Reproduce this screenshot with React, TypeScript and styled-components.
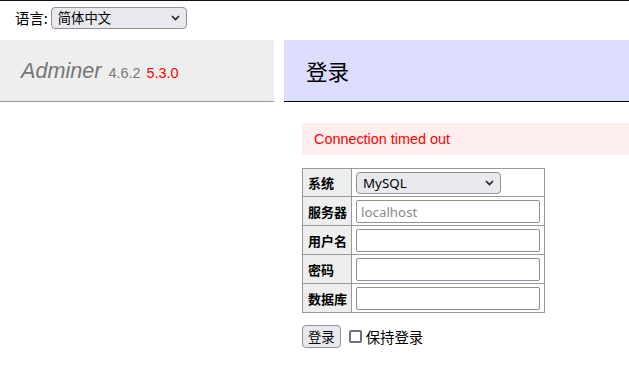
import React from "react";
import styled, { createGlobalStyle } from "styled-components";

const GlobalStyle = createGlobalStyle`
    html, body {
        margin: 0;
        padding: 0;
        background: #fff;
    }
    body {
        font-family: "Liberation Sans", "Noto Sans CJK SC", Arial, sans-serif;
        font-size: 14.4px;
        color: #000;
    }
`;

const controlFont = `"Noto Sans", "Noto Sans CJK SC", sans-serif`;

const Page = styled.div`
    display: flex;
    flex-direction: column;
    min-height: 374px;
    border-top: 1px solid #111;
`;

const LangBar = styled.div`
    display: flex;
    align-items: flex-start;
    gap: 3px;
    height: 39px;
    padding: 6px 0 0 15px;
    box-sizing: border-box;
`;

const LangLabel = styled.span`
    font-family: "Noto Sans CJK SC", sans-serif;
    font-size: 14.4px;
    line-height: 22px;
`;

const SelectWrap = styled.span`
    position: relative;
    display: inline-flex;
`;

const Select = styled.select<{ $width: number }>`
    appearance: none;
    width: ${(p) => p.$width}px;
    height: 22px;
    box-sizing: border-box;
    padding: 0 20px 0 6px;
    font-family: ${controlFont};
    font-size: 13.33px;
    color: #000;
    background: #e9e9ed;
    border: 1px solid #8f8f9d;
    border-radius: 4px;
    outline: none;
`;

const Chevron = styled.svg`
    position: absolute;
    right: 7px;
    top: 8px;
    width: 9px;
    height: 6px;
    pointer-events: none;
`;

const Main = styled.div`
    display: flex;
    gap: 10px;
`;

const Menu = styled.div`
    width: 274px;
    flex: none;
`;

const MenuHeader = styled.div`
    display: flex;
    align-items: center;
    gap: 7px;
    height: 61px;
    padding-left: 21px;
    background: #eee;
    border-bottom: 1px solid #999;
`;

const Brand = styled.span`
    font-style: italic;
    font-size: 21.6px;
    color: #777;
`;

const Version = styled.span<{ $new?: boolean }>`
    font-size: 14.4px;
    color: ${(p) => (p.$new ? "#f00" : "#777")};
    margin-left: ${(p) => (p.$new ? "-1px" : "0")};
    padding-top: 4px;
`;

const Content = styled.div`
    flex: 1;
    min-width: 0;
`;

const Title = styled.h1`
    display: flex;
    align-items: center;
    height: 61px;
    margin: 0;
    padding-left: 22px;
    background: #ddf;
    border-bottom: 1px solid #000;
    font-family: "Noto Sans CJK SC", sans-serif;
    font-size: 21.6px;
    font-weight: normal;
`;

const Body = styled.div`
    padding-left: 18px;
`;

const ErrorBox = styled.div`
    display: flex;
    align-items: center;
    height: 32px;
    margin-top: 21px;
    padding-left: 12px;
    background: #fee;
    color: #f00;
    font-size: 14.4px;
`;

const Table = styled.table`
    margin-top: 13px;
    border-collapse: collapse;
    font-size: 13px;
`;

const Th = styled.th`
    padding: 0 4px 0 5px;
    text-align: left;
    background: #eee;
    border: 1px solid #999;
    font-family: "Noto Sans CJK SC", sans-serif;
    font-weight: bold;
    white-space: nowrap;
`;

const Td = styled.td`
    padding: 3px 4px 2px 4px;
    border: 1px solid #999;
    vertical-align: middle;
`;

const Input = styled.input`
    display: block;
    width: 184px;
    height: 23px;
    box-sizing: border-box;
    padding: 0 4px;
    font-family: ${controlFont};
    font-size: 13.33px;
    border: 1px solid #8f8f9d;
    border-radius: 2px;
    background: #fff;
    outline: none;
    &::placeholder {
        color: #8a8a8a;
    }
`;

const Actions = styled.div`
    display: flex;
    align-items: center;
    margin-top: 12px;
`;

const Button = styled.button`
    height: 23px;
    padding: 0 5px;
    font-family: "Noto Sans CJK SC", sans-serif;
    font-size: 13.33px;
    color: #000;
    background: #e9e9ed;
    border: 1px solid #8f8f9d;
    border-radius: 4px;
`;

const CheckLabel = styled.label`
    display: flex;
    align-items: center;
    gap: 4px;
    margin-left: 8px;
    font-family: "Noto Sans CJK SC", sans-serif;
    font-size: 14.4px;
`;

const Checkbox = styled.input`
    appearance: none;
    width: 13px;
    height: 13px;
    margin: 0;
    box-sizing: border-box;
    border: 2px solid #707078;
    border-radius: 2px;
    background: #fff;
`;

const ChevronIcon: React.FC = () => (
    <Chevron viewBox="0 0 9 6">
        <path d="M1 1 L4.5 4.5 L8 1" fill="none" stroke="#222" strokeWidth="1.6" />
    </Chevron>
);

const fields = [
    { label: "服务器", placeholder: "localhost" },
    { label: "用户名" },
    { label: "密码", type: "password" },
    { label: "数据库" },
];

const App: React.FC = () => {
    return (
        <Page>
            <GlobalStyle />
            <LangBar>
                <LangLabel>语言:</LangLabel>
                <SelectWrap>
                    <Select $width={136} defaultValue="zh">
                        <option value="zh">简体中文</option>
                    </Select>
                    <ChevronIcon />
                </SelectWrap>
            </LangBar>
            <Main>
                <Menu>
                    <MenuHeader>
                        <Brand>Adminer</Brand>
                        <Version>4.6.2</Version>
                        <Version $new>5.3.0</Version>
                    </MenuHeader>
                </Menu>
                <Content>
                    <Title>登录</Title>
                    <Body>
                        <ErrorBox>Connection timed out</ErrorBox>
                        <Table>
                            <tbody>
                                <tr>
                                    <Th>系统</Th>
                                    <Td>
                                        <SelectWrap>
                                            <Select $width={145} defaultValue="server">
                                                <option value="server">MySQL</option>
                                            </Select>
                                            <ChevronIcon />
                                        </SelectWrap>
                                    </Td>
                                </tr>
                                {fields.map((f) => (
                                    <tr key={f.label}>
                                        <Th>{f.label}</Th>
                                        <Td>
                                            <Input type={f.type || "text"} placeholder={f.placeholder} />
                                        </Td>
                                    </tr>
                                ))}
                            </tbody>
                        </Table>
                        <Actions>
                            <Button>登录</Button>
                            <CheckLabel>
                                <Checkbox type="checkbox" />
                                保持登录
                            </CheckLabel>
                        </Actions>
                    </Body>
                </Content>
            </Main>
        </Page>
    );
};

export default App;
